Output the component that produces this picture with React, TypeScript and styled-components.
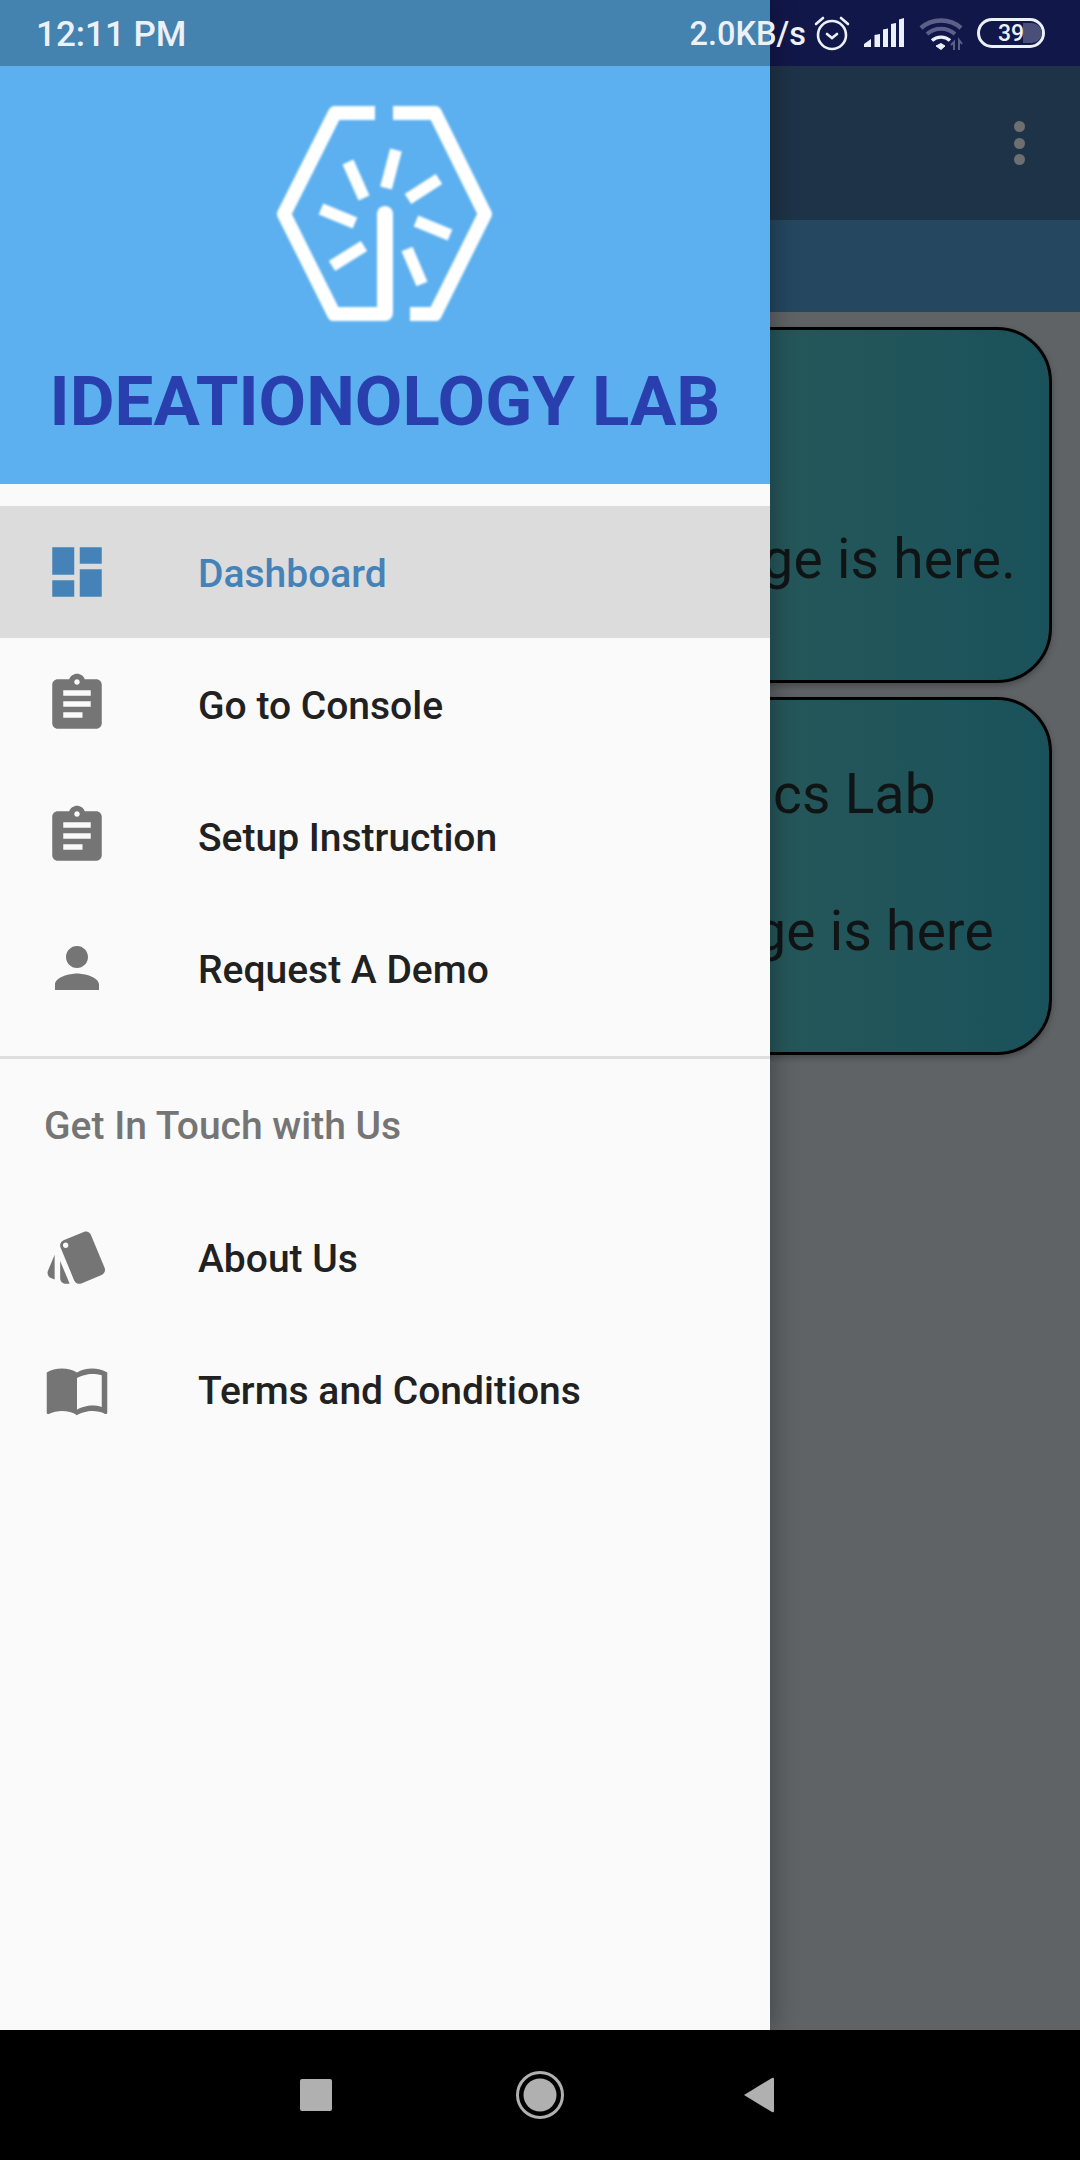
import styled, { createGlobalStyle } from 'styled-components';
import { MdAssignment, MdDashboard, MdImportContacts, MdPerson, MdStyle } from 'react-icons/md';

const GlobalStyle = createGlobalStyle`
  html, body {
    margin: 0;
    padding: 0;
    background: #000;
    font-family: Roboto, "Liberation Sans", sans-serif;
  }
`;

const Screen = styled.div`
  position: relative;
  width: 1080px;
  height: 2160px;
  overflow: hidden;
  display: flex;
  flex-direction: column;
  background: #000;
`;

/* the app behind the open drawer */
const Behind = styled.div`
  flex: 1;
  display: flex;
  flex-direction: column;
  background: #5f6366;
`;

const BehindStatus = styled.div`
  height: 66px;
  background: #12174a;
`;

const AppBar = styled.div`
  height: 154px;
  background: #1e3347;
  display: flex;
  align-items: center;
  justify-content: flex-end;
  padding-right: 55px;
`;

const MoreDots = styled.div`
  display: flex;
  flex-direction: column;
  gap: 5.5px;

  span {
    width: 11px;
    height: 11px;
    border-radius: 50%;
    background: #6d6f71;
  }
`;

const TabStrip = styled.div`
  height: 92px;
  background: #254760;
`;

const Cards = styled.div`
  display: flex;
  flex-direction: column;
  gap: 14px;
  padding: 15px 28px 0;
`;

const Card = styled.div<{ $height: number }>`
  height: ${(p) => p.$height}px;
  box-sizing: border-box;
  border: 3px solid #000;
  border-radius: 55px;
  background: linear-gradient(90deg, #2a5959 60%, #1a525b 100%);
  box-shadow: 0 3px 6px rgba(0, 0, 0, 0.25);
  display: flex;
  flex-direction: column;
  align-items: flex-end;
  justify-content: flex-end;
  color: #111415;
  font-size: 55px;
  line-height: 64px;
  letter-spacing: 0.3px;
`;

const CardLine = styled.div<{ $right: number; $bottom: number }>`
  white-space: nowrap;
  margin-right: ${(p) => p.$right}px;
  margin-bottom: ${(p) => p.$bottom}px;
`;

const Drawer = styled.aside`
  position: absolute;
  left: 0;
  top: 0;
  bottom: 130px;
  width: 770px;
  background: #fafafa;
  box-shadow: 4px 0 22px rgba(0, 0, 0, 0.28);
  display: flex;
  flex-direction: column;
`;

const DrawerStatus = styled.div`
  height: 66px;
  background: #4482b0;
`;

const DrawerHeader = styled.div`
  height: 418px;
  background: #5cb0ef;
  display: flex;
  flex-direction: column;
  align-items: center;
  padding-top: 27px;
  box-sizing: border-box;
`;

const Title = styled.div`
  margin-top: 19px;
  font-size: 69px;
  line-height: 80px;
  font-weight: 700;
  color: #2a3fae;
  white-space: nowrap;
`;

const Section = styled.nav`
  padding: 22px 0;
`;

const Row = styled.div<{ $active?: boolean }>`
  height: 132px;
  display: flex;
  align-items: center;
  gap: 88px;
  padding-left: 44px;
  background: ${(p) => (p.$active ? '#dcdcdc' : 'transparent')};
  color: ${(p) => (p.$active ? '#4482b8' : '#757575')};

  svg {
    flex: none;
    width: 66px;
    height: 66px;
  }
`;

const RowLabel = styled.span<{ $active?: boolean }>`
  padding-top: 4px;
  font-size: 39px;
  font-weight: 500;
  color: ${(p) => (p.$active ? '#4482b8' : '#212121')};
`;

const Divider = styled.div`
  height: 3px;
  background: #dedede;
`;

const SubHeader = styled.div`
  height: 132px;
  margin-top: -22px;
  padding: 2px 0 0 44px;
  box-sizing: border-box;
  display: flex;
  align-items: center;
  font-size: 39px;
  font-weight: 500;
  color: #757575;
`;

const StatusBar = styled.div`
  position: absolute;
  top: 0;
  left: 0;
  right: 0;
  height: 66px;
  padding: 0 35px 0 36px;
  box-sizing: border-box;
  display: flex;
  align-items: center;
  justify-content: space-between;
  color: #ecf1f8;
  font-weight: 500;
`;

const Clock = styled.span`
  padding-top: 2px;
  font-size: 35px;
`;

const StatusRight = styled.div`
  display: flex;
  align-items: center;
`;

const Speed = styled.span`
  padding-top: 2px;
  font-size: 32.5px;
  margin-right: 7px;
`;

const StatusSpacer = styled.span<{ $width: number }>`
  width: ${(p) => p.$width}px;
`;

const NavBar = styled.div`
  height: 130px;
  flex: none;
  background: #000;
  display: flex;
  align-items: center;
  gap: 184px;
  padding-left: 300px;

  svg:last-child {
    margin-left: -5px;
  }
`;

const Logo = () => (
  <svg width="270" height="250" viewBox="0 0 270 250" style={{ flex: 'none' }}>
    <defs>
      <filter id="soft">
        <feGaussianBlur stdDeviation="1" />
      </filter>
    </defs>
    <g fill="none" stroke="#fff" filter="url(#soft)" strokeLinejoin="round">
      <path strokeWidth="14" d="M125 20H85L34 121l50 100h51" />
      <path strokeWidth="16" d="M135 220V121" strokeLinecap="round" />
      <path strokeWidth="14" d="M143 20h42l50 101-50 100h-25" />
      <g strokeWidth="12">
        <path d="M98 69l16 36" />
        <path d="M146 57l-10 38" />
        <path d="M189 86l-31 20" />
        <path d="M71 116l34 14" />
        <path d="M166 128l34 14" />
        <path d="M114 153l-32 20" />
        <path d="M157 156l15 35" />
      </g>
    </g>
  </svg>
);

const AlarmIcon = () => (
  <svg width="38" height="36" viewBox="0 0 38 36" fill="none" stroke="#ecf1f8" strokeWidth="2.6">
    <circle cx="19" cy="20" r="14" />
    <path d="M14 19l5 4 5-4" strokeLinecap="round" />
    <path d="M3 9l7-6M35 9l-7-6" strokeLinecap="round" />
  </svg>
);

const SignalIcon = () => (
  <svg width="42" height="30" viewBox="0 0 42 30" fill="#ecf1f8">
    <path d="M1 29v-3l7-5v8zM11.500 29V17l5.500-1v13zM20 29V11.500l5-1V29zM28 29V6l5-1v24zM36 29V1.500l5-1.500v29z" />
  </svg>
);

const WifiIcon = () => (
  <svg width="46" height="34" viewBox="0 0 46 34" fill="none">
    <path d="M3 12c11-10 29-10 40 0" stroke="#5b6088" strokeWidth="4.500" />
    <path d="M9 18c8-7 20-7 28 0" stroke="#5b6088" strokeWidth="4" />
    <path d="M14 24.500c5-4.500 13-4.500 18 0" stroke="#ecf1f8" strokeWidth="3.400" />
    <path d="M18 30l5-2.500 4 2.500-4 3.500z" fill="#ecf1f8" stroke="#ecf1f8" />
    <path d="M36 34v-8l-3 3M41 34v-10l3 4" stroke="#5b6088" strokeWidth="2" />
  </svg>
);

const BatteryIcon = () => (
  <svg width="68" height="30" viewBox="0 0 68 30">
    <rect x="1.500" y="1.500" width="65" height="27" rx="13.500" fill="none" stroke="#ecf1f8" strokeWidth="3" />
    <path d="M46 5h9a10 10 0 0 1 0 20h-9z" fill="#4a4f78" />
    <text x="34" y="23" textAnchor="middle" fontFamily="Roboto" fontSize="23" fontWeight="500" fill="#ecf1f8">
      39
    </text>
  </svg>
);

function App() {
  return (
    <Screen>
      <GlobalStyle />
      <Behind>
        <BehindStatus />
        <AppBar>
          <MoreDots>
            <span />
            <span />
            <span />
          </MoreDots>
        </AppBar>
        <TabStrip />
        <Cards>
          <Card $height={356}>
            <CardLine $right={33} $bottom={89}>
              Challenge is here.
            </CardLine>
          </Card>
          <Card $height={358}>
            <CardLine $right={113} $bottom={73}>
              Robotics Lab
            </CardLine>
            <CardLine $right={55} $bottom={89}>
              Challenge is here
            </CardLine>
          </Card>
        </Cards>
      </Behind>

      <Drawer>
        <DrawerStatus />
        <DrawerHeader>
          <Logo />
          <Title>IDEATIONOLOGY LAB</Title>
        </DrawerHeader>
        <Section>
          <Row $active>
            <MdDashboard />
            <RowLabel $active>Dashboard</RowLabel>
          </Row>
          <Row>
            <MdAssignment />
            <RowLabel>Go to Console</RowLabel>
          </Row>
          <Row>
            <MdAssignment />
            <RowLabel>Setup Instruction</RowLabel>
          </Row>
          <Row>
            <MdPerson />
            <RowLabel>Request A Demo</RowLabel>
          </Row>
        </Section>
        <Divider />
        <Section>
          <SubHeader>Get In Touch with Us</SubHeader>
          <Row>
            <MdStyle />
            <RowLabel>About Us</RowLabel>
          </Row>
          <Row>
            <MdImportContacts />
            <RowLabel>Terms and Conditions</RowLabel>
          </Row>
        </Section>
      </Drawer>

      <StatusBar>
        <Clock>12:11 PM</Clock>
        <StatusRight>
          <Speed>2.0KB/s</Speed>
          <AlarmIcon />
          <StatusSpacer $width={12} />
          <SignalIcon />
          <StatusSpacer $width={13} />
          <WifiIcon />
          <StatusSpacer $width={13} />
          <BatteryIcon />
        </StatusRight>
      </StatusBar>

      <NavBar>
        <svg width="32" height="32" viewBox="0 0 32 32">
          <rect width="32" height="32" rx="2" fill="#b0b0b0" />
        </svg>
        <svg width="48" height="48" viewBox="0 0 48 48">
          <circle cx="24" cy="24" r="22.5" fill="none" stroke="#b0b0b0" strokeWidth="3" />
          <circle cx="24" cy="24" r="16.5" fill="#b0b0b0" />
        </svg>
        <svg width="32" height="36" viewBox="0 0 32 36">
          <path d="M1 18L29 1q2-1 2 1v32q0 2-2 1z" fill="#b0b0b0" />
        </svg>
      </NavBar>
    </Screen>
  );
}

export default App;
